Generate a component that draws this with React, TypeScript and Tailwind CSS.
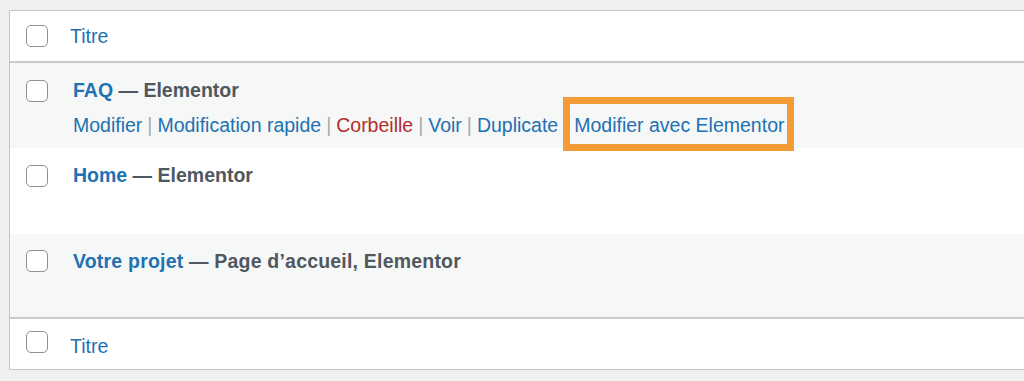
import React from "react";

const Box = () => (
  <span className="inline-block w-[22px] h-[22px] shrink-0 rounded-[5px] border-[1.5px] border-[#8c8f94] bg-white" />
);

const Sep = () => <span className="text-[#a7aaad] px-[5px]">|</span>;

export default function App() {
  return (
    <div
      className="w-[1024px] h-[381px] bg-[#f0f0f1] pt-[10px] pl-[9px] overflow-hidden"
      style={{ fontFamily: '"Liberation Sans", Arial, sans-serif' }}
    >
      <div className="w-[1100px] border border-[#c3c4c7] bg-white">
        {/* header */}
        <div className="h-[52px] flex items-center pl-[16px] border-b-2 border-[#c9cacc] bg-white">
          <Box />
          <span className="ml-[22px] text-[19.5px] text-[#2271b1] leading-[26px]">Titre</span>
        </div>
        {/* row 1 */}
        <div className="h-[85px] flex items-start pl-[16px] pt-[14px] bg-[#f6f7f7]">
          <div className="mt-[3px]"><Box /></div>
          <div className="ml-[25px]">
            <div className="text-[19.5px] leading-[26px] font-bold text-[#50575e]">
              <span className="text-[#2271b1]">FAQ</span> — Elementor
            </div>
            <div className="mt-[9px] text-[19.5px] leading-[26px] flex items-center">
              <span className="text-[#2271b1]">Modifier</span>
              <Sep />
              <span className="text-[#2271b1]">Modification rapide</span>
              <Sep />
              <span className="text-[#b32d2e]">Corbeille</span>
              <Sep />
              <span className="text-[#2271b1]">Voir</span>
              <Sep />
              <span className="text-[#2271b1]">Duplicate</span>
              <span className="relative ml-[16px] text-[#2271b1]">
                Modifier avec Elementor
                <span className="absolute -left-[11px] -right-[10px] -top-[15px] -bottom-[13px] border-[7px] border-[#f39b37]" />
              </span>
            </div>
          </div>
        </div>
        {/* row 2 */}
        <div className="h-[86px] flex items-start pl-[16px] pt-[14px] bg-white">
          <div className="mt-[3px]"><Box /></div>
          <div className="ml-[25px] text-[19.5px] leading-[26px] font-bold text-[#50575e]">
            <span className="text-[#2271b1]">Home</span> — Elementor
          </div>
        </div>
        {/* row 3 */}
        <div className="h-[85px] flex items-start pl-[16px] pt-[14px] bg-[#f6f7f7] border-b-2 border-[#c9cacc]">
          <div className="mt-[2px]"><Box /></div>
          <div className="ml-[25px] text-[19.5px] leading-[26px] font-bold text-[#50575e] tracking-[0.2px]">
            <span className="text-[#2271b1]">Votre projet</span> — Page d’accueil, Elementor
          </div>
        </div>
        {/* footer */}
        <div className="h-[50px] flex items-center pl-[16px] bg-white">
          <div className="mt-[2px]"><Box /></div>
          <span className="ml-[22px] mt-[3px] text-[19.5px] text-[#2271b1] leading-[26px]">Titre</span>
        </div>
      </div>
    </div>
  );
}
